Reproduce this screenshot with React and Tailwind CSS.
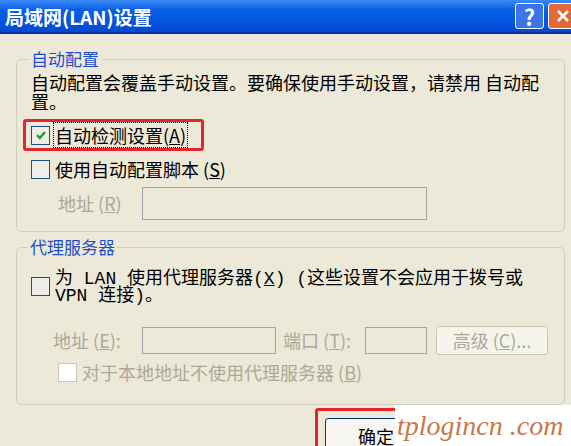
import React from 'react';

const font = { fontFamily: '"Noto Sans CJK SC", "Noto Sans", sans-serif' };
const monoFont = { fontFamily: '"Liberation Mono", "Noto Sans CJK SC", monospace' };

function CheckBox({ checked, disabled }) {
  return (
    <span
      className={`flex h-[19px] w-[19px] shrink-0 items-center justify-center border ${
        disabled
          ? 'border-[#c9c7ba] bg-white'
          : 'border-[#1c5180] bg-[#eeeee8]'
      }`}
    >
      {checked && (
        <svg viewBox="0 0 12 12" className="h-[12px] w-[12px]">
          <path d="M2 6.2 L4.8 9 L10 3" fill="none" stroke="#21a121" strokeWidth="2.4" />
        </svg>
      )}
    </span>
  );
}

function TextBox({ className }) {
  return <div className={`border border-[#9fa8ab] bg-[#ece9d8] ${className}`} />;
}

function TitleBar() {
  return (
    <div className="flex h-[34px] w-full shrink-0 items-center justify-between border-b-2 border-[#0831a8] bg-blue-700 bg-[linear-gradient(180deg,#3b8af5_0%,#0b5fe6_30%,#0454e2_70%,#0348cf_100%)] pl-[5px] text-white">
      <span className="text-[19px] font-bold text-white">局域网(LAN)设置</span>
      <div className="-mr-[6px] flex items-center gap-[4px]">
        <div className="flex h-[26px] w-[29px] items-center justify-center rounded-[3px] border border-white bg-[#3a74e6] text-[22px] font-bold text-white">
          ?
        </div>
        <div className="flex h-[26px] w-[29px] items-center justify-center rounded-[3px] border border-white bg-[#e2683c]">
          <svg viewBox="0 0 14 14" className="h-[14px] w-[14px]">
            <path d="M2 2 L12 12 M12 2 L2 12" stroke="white" strokeWidth="2.6" />
          </svg>
        </div>
      </div>
    </div>
  );
}

export default function App() {
  return (
    <div
      className="relative flex h-[446px] w-[571px] flex-col overflow-hidden bg-[#ece9d8] text-[18px] leading-[19px] text-black"
      style={font}
    >
      <TitleBar />

      <div className="flex flex-col pl-[16px] pr-[6px]">
        {/* 自动配置 */}
        <fieldset className="mt-[16px] w-[549px] rounded-[5px] border border-[#d0d0bf] pb-[11px] pl-[14px]">
          <legend className="-ml-[2px] px-[2px] text-[17px] leading-[18px] text-[#1f4fc8]">自动配置</legend>
          <p className="mt-[5px] whitespace-nowrap">
            自动配置会覆盖手动设置。要确保使用手动设置，请禁用 自动配
            <br />
            置。
          </p>
          <div className="relative mt-[8px] flex h-[32px] items-center">
            <div className="pointer-events-none absolute left-[-8px] top-0 h-[32px] w-[181px] rounded-[3px] border-[3px] border-[#e3262b]" />
            <CheckBox checked />
            <span className="ml-[3px] flex h-[26px] items-center border border-dotted border-black px-[1px]">
              自动检测设置(<u>A</u>)
            </span>
          </div>
          <div className="mt-[8px] flex h-[20px] items-center">
            <CheckBox />
            <span className="ml-[5px]">
              使用自动配置脚本 (<u>S</u>)
            </span>
          </div>
          <div className="mt-[8px] flex h-[33px] items-center">
            <span className="w-[111px] pl-[27px] text-[#aca899]">
              地址 (<u>R</u>)
            </span>
            <TextBox className="h-[33px] w-[285px]" />
          </div>
        </fieldset>

        {/* 代理服务器 */}
        <fieldset className="mt-[6px] w-[549px] rounded-[5px] border border-[#d0d0bf] pb-[22px] pl-[14px]">
          <legend className="-ml-[3px] px-[2px] text-[17px] leading-[18px] text-[#1f4fc8]">代理服务器</legend>
          <div className="mt-[15px] flex items-start">
            <div className="mt-[6px]">
              <CheckBox />
            </div>
            <p className="ml-[5px] whitespace-nowrap leading-[17px]" style={monoFont}>
              为 LAN 使用代理服务器(<u>X</u>) (这些设置不会应用于拨号或
              <br />
              VPN 连接)。
            </p>
          </div>
          <div className="mt-[21px] flex h-[29px] items-center text-[#aca899]">
            <span className="w-[111px] pl-[22px]">
              地址 (<u>E</u>):
            </span>
            <TextBox className="h-[27px] w-[134px]" />
            <span className="ml-[7px] w-[82px]">
              端口 (<u>T</u>):
            </span>
            <TextBox className="h-[27px] w-[62px]" />
            <div className="ml-[9px] flex h-[29px] w-[112px] items-center justify-center rounded-[3px] border border-[#c9c7ba] bg-[#f5f4ea]">
              高级 (<u>C</u>)...
            </div>
          </div>
          <div className="mt-[8px] flex h-[19px] items-center pl-[27px] text-[#aca899]">
            <CheckBox disabled />
            <span className="ml-[5px]">
              对于本地地址不使用代理服务器 (<u>B</u>)
            </span>
          </div>
        </fieldset>

        {/* Buttons */}
        <div className="flex justify-end">
          <div className="mt-[3px] h-[50px] w-[250px] shrink-0 rounded-[3px] border-[3px] border-[#e3262b] pl-[7px] pt-[7px]">
            <div className="flex h-[34px] w-[150px] items-start rounded-[3px] border border-[#003c74] bg-[#f6f5ef] pl-[32px] pt-[8px]">
              确定
            </div>
          </div>
        </div>
      </div>

      {/* watermark */}
      <div className="absolute bottom-0 right-0 flex h-[41px] w-[176px] items-center bg-white pl-[2px]">
        <span
          className="whitespace-nowrap text-[28px] italic text-[#c8784a]"
          style={{ fontFamily: '"Liberation Serif", serif' }}
        >
          tplogincn .com
        </span>
      </div>
    </div>
  );
}
